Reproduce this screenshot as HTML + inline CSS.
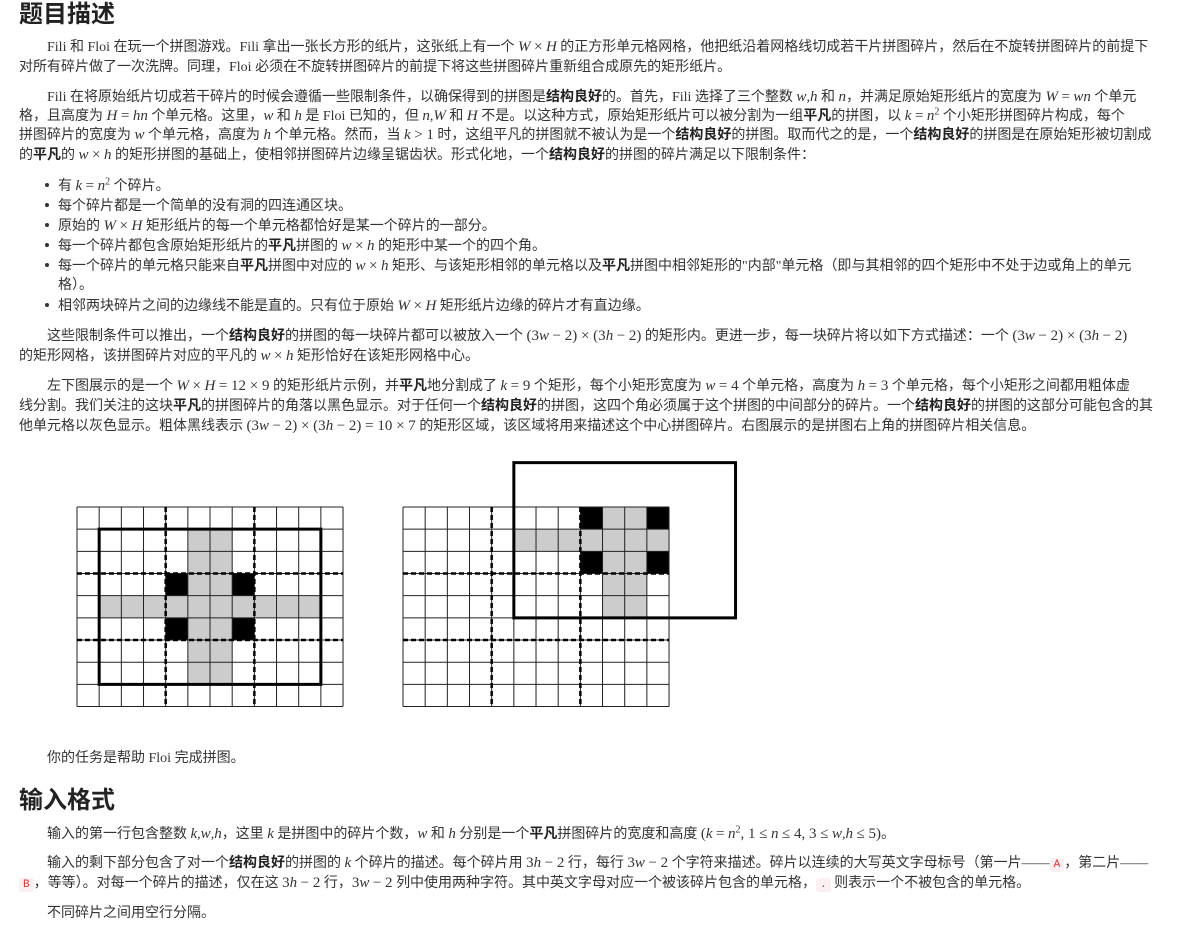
<!DOCTYPE html>
<html><head><meta charset="utf-8">
<style>
html,body{margin:0;padding:0;background:#fff;}
body{width:1204px;height:926px;position:relative;overflow:hidden;color:#333;font-family:"Liberation Serif","Noto Sans CJK SC",sans-serif;font-size:14px;}
.l{position:absolute;white-space:nowrap;line-height:19px;}
h1{position:absolute;margin:0;font-size:24px;font-weight:bold;left:19px;line-height:30px;color:#222;font-family:"Liberation Sans","Noto Sans CJK SC",sans-serif;}
i{font-family:"Liberation Serif",serif;font-style:italic;font-size:15px;}
.m{font-family:"Liberation Serif",serif;font-size:15px;}
sup{font-size:10px;line-height:0;}
b{font-weight:bold;color:#222;}
.d{position:absolute;left:45px;width:4px;height:4px;border-radius:50%;background:#333;}
code{font-family:"Liberation Mono",monospace;font-size:11px;background:#fbeff2;color:#d33;padding:1px 4px;border-radius:3px;}
</style></head><body>
<h1 style="top:0">题目描述</h1>
<div class="l" style="left:47px;top:38px">Fili 和 Floi 在玩一个拼图游戏。Fili 拿出一张长方形的纸片，这张纸上有一个 <i>W</i> <span class="m">×</span> <i>H</i> 的正方形单元格网格，他把纸沿着网格线切成若干片拼图碎片，然后在不旋转拼图碎片的前提下</div>
<div class="l" style="left:19px;top:58px">对所有碎片做了一次洗牌。同理，Floi 必须在不旋转拼图碎片的前提下将这些拼图碎片重新组合成原先的矩形纸片。</div>
<div class="l" style="left:47px;top:88px">Fili 在将原始纸片切成若干碎片的时候会遵循一些限制条件，以确保得到的拼图是<b>结构良好</b>的。首先，Fili 选择了三个整数 <i>w</i>,<i>h</i> 和 <i>n</i>，并满足原始矩形纸片的宽度为 <i>W</i> <span class="m">=</span> <i>wn</i> 个单元</div>
<div class="l" style="left:19px;top:107px">格，且高度为 <i>H</i> <span class="m">=</span> <i>hn</i> 个单元格。这里，<i>w</i> 和 <i>h</i> 是 Floi 已知的，但 <i>n</i>,<i>W</i> 和 <i>H</i> 不是。以这种方式，原始矩形纸片可以被分割为一组<b>平凡</b>的拼图，以 <i>k</i> <span class="m">=</span> <i>n</i><sup>2</sup> 个小矩形拼图碎片构成，每个</div>
<div class="l" style="left:19px;top:126px">拼图碎片的宽度为 <i>w</i> 个单元格，高度为 <i>h</i> 个单元格。然而，当 <i>k</i> <span class="m">&gt; 1</span> 时，这组平凡的拼图就不被认为是一个<b>结构良好</b>的拼图。取而代之的是，一个<b>结构良好</b>的拼图是在原始矩形被切割成</div>
<div class="l" style="left:19px;top:146px">的<b>平凡</b>的 <i>w</i> <span class="m">×</span> <i>h</i> 的矩形拼图的基础上，使相邻拼图碎片边缘呈锯齿状。形式化地，一个<b>结构良好</b>的拼图的碎片满足以下限制条件：</div>
<div class="d" style="top:183px"></div><div class="l" style="left:58px;top:177px">有 <i>k</i> <span class="m">=</span> <i>n</i><sup>2</sup> 个碎片。</div>
<div class="d" style="top:203px"></div><div class="l" style="left:58px;top:197px">每个碎片都是一个简单的没有洞的四连通区块。</div>
<div class="d" style="top:223px"></div><div class="l" style="left:58px;top:217px">原始的 <i>W</i> <span class="m">×</span> <i>H</i> 矩形纸片的每一个单元格都恰好是某一个碎片的一部分。</div>
<div class="d" style="top:243px"></div><div class="l" style="left:58px;top:237px">每一个碎片都包含原始矩形纸片的<b>平凡</b>拼图的 <i>w</i> <span class="m">×</span> <i>h</i> 的矩形中某一个的四个角。</div>
<div class="d" style="top:263px"></div><div class="l" style="left:58px;top:257px">每一个碎片的单元格只能来自<b>平凡</b>拼图中对应的 <i>w</i> <span class="m">×</span> <i>h</i> 矩形、与该矩形相邻的单元格以及<b>平凡</b>拼图中相邻矩形的"内部"单元格（即与其相邻的四个矩形中不处于边或角上的单元</div>
<div class="l" style="left:58px;top:276px">格）。</div>
<div class="d" style="top:303px"></div><div class="l" style="left:58px;top:297px">相邻两块碎片之间的边缘线不能是直的。只有位于原始 <i>W</i> <span class="m">×</span> <i>H</i> 矩形纸片边缘的碎片才有直边缘。</div>
<div class="l" style="left:47px;top:327px">这些限制条件可以推出，一个<b>结构良好</b>的拼图的每一块碎片都可以被放入一个 <span class="m">(3</span><i>w</i> <span class="m">− 2) × (3</span><i>h</i> <span class="m">− 2)</span> 的矩形内。更进一步，每一块碎片将以如下方式描述：一个 <span class="m">(3</span><i>w</i> <span class="m">− 2) × (3</span><i>h</i> <span class="m">− 2)</span></div>
<div class="l" style="left:19px;top:347px">的矩形网格，该拼图碎片对应的平凡的 <i>w</i> <span class="m">×</span> <i>h</i> 矩形恰好在该矩形网格中心。</div>
<div class="l" style="left:47px;top:377px">左下图展示的是一个 <i>W</i> <span class="m">×</span> <i>H</i> <span class="m">= 12 × 9</span> 的矩形纸片示例，并<b>平凡</b>地分割成了 <i>k</i> <span class="m">= 9</span> 个矩形，每个小矩形宽度为 <i>w</i> <span class="m">= 4</span> 个单元格，高度为 <i>h</i> <span class="m">= 3</span> 个单元格，每个小矩形之间都用粗体虚</div>
<div class="l" style="left:19px;top:397px">线分割。我们关注的这块<b>平凡</b>的拼图碎片的角落以黑色显示。对于任何一个<b>结构良好</b>的拼图，这四个角必须属于这个拼图的中间部分的碎片。一个<b>结构良好</b>的拼图的这部分可能包含的其</div>
<div class="l" style="left:19px;top:417px">他单元格以灰色显示。粗体黑线表示 <span class="m">(3</span><i>w</i> <span class="m">− 2) × (3</span><i>h</i> <span class="m">− 2) = 10 × 7</span> 的矩形区域，该区域将用来描述这个中心拼图碎片。右图展示的是拼图右上角的拼图碎片相关信息。</div>

<svg style="position:absolute;left:0;top:0" width="1204" height="926">
<g transform="translate(77,507) scale(22.17)">
<rect x="0" y="0" width="12" height="9" fill="#fff"/>
<rect x="5" y="1" width="2" height="7" fill="#ccc"/><rect x="1" y="4" width="10" height="1" fill="#ccc"/><rect x="4" y="3" width="4" height="3" fill="#ccc"/>
<rect x="4" y="3" width="1" height="1"/><rect x="7" y="3" width="1" height="1"/><rect x="4" y="5" width="1" height="1"/><rect x="7" y="5" width="1" height="1"/>
<path vector-effect="non-scaling-stroke" stroke="#222" stroke-width="1" fill="none" d="M0 0V9M1 0V9M2 0V9M3 0V9M4 0V9M5 0V9M6 0V9M7 0V9M8 0V9M9 0V9M10 0V9M11 0V9M12 0V9M0 0H12M0 1H12M0 2H12M0 3H12M0 4H12M0 5H12M0 6H12M0 7H12M0 8H12M0 9H12"/>
<path vector-effect="non-scaling-stroke" stroke="#000" stroke-width="2.5" stroke-dasharray="5 3" fill="none" d="M4 0V9M8 0V9M0 3H12M0 6H12"/>
<rect vector-effect="non-scaling-stroke" x="1" y="1" width="10" height="7" fill="none" stroke="#000" stroke-width="3"/>
</g>
<g transform="translate(403,507) scale(22.17)">
<rect x="0" y="0" width="12" height="9" fill="#fff"/>
<rect x="9" y="0" width="2" height="5" fill="#ccc"/><rect x="5" y="1" width="7" height="1" fill="#ccc"/>
<rect x="8" y="0" width="1" height="1"/><rect x="11" y="0" width="1" height="1"/><rect x="8" y="2" width="1" height="1"/><rect x="11" y="2" width="1" height="1"/>
<path vector-effect="non-scaling-stroke" stroke="#222" stroke-width="1" fill="none" d="M0 0V9M1 0V9M2 0V9M3 0V9M4 0V9M5 0V9M6 0V9M7 0V9M8 0V9M9 0V9M10 0V9M11 0V9M12 0V9M0 0H12M0 1H12M0 2H12M0 3H12M0 4H12M0 5H12M0 6H12M0 7H12M0 8H12M0 9H12"/>
<path vector-effect="non-scaling-stroke" stroke="#000" stroke-width="2.5" stroke-dasharray="5 3" fill="none" d="M4 0V9M8 0V9M0 3H12M0 6H12"/>
<rect vector-effect="non-scaling-stroke" x="5" y="-2" width="10" height="7" fill="none" stroke="#000" stroke-width="3"/>
</g>
</svg>

<div class="l" style="left:47px;top:749px">你的任务是帮助 Floi 完成拼图。</div>
<h1 style="top:786px">输入格式</h1>
<div class="l" style="left:47px;top:825px">输入的第一行包含整数 <i>k</i>,<i>w</i>,<i>h</i>，这里 <i>k</i> 是拼图中的碎片个数，<i>w</i> 和 <i>h</i> 分别是一个<b>平凡</b>拼图碎片的宽度和高度 <span class="m">(</span><i>k</i> <span class="m">=</span> <i>n</i><sup>2</sup><span class="m">, 1 ≤</span> <i>n</i> <span class="m">≤ 4, 3 ≤</span> <i>w</i>,<i>h</i> <span class="m">≤ 5)</span>。</div>
<div class="l" style="left:47px;top:854px">输入的剩下部分包含了对一个<b>结构良好</b>的拼图的 <i>k</i> 个碎片的描述。每个碎片用 <span class="m">3</span><i>h</i> <span class="m">− 2</span> 行，每行 <span class="m">3</span><i>w</i> <span class="m">− 2</span> 个字符来描述。碎片以连续的大写英文字母标号（第一片——<code>A</code>，第二片——</div>
<div class="l" style="left:19px;top:874px"><code>B</code>，等等）。对每一个碎片的描述，仅在这 <span class="m">3</span><i>h</i> <span class="m">− 2</span> 行，<span class="m">3</span><i>w</i> <span class="m">− 2</span> 列中使用两种字符。其中英文字母对应一个被该碎片包含的单元格，<code>.</code> 则表示一个不被包含的单元格。</div>
<div class="l" style="left:47px;top:904px">不同碎片之间用空行分隔。</div>
</body></html>
